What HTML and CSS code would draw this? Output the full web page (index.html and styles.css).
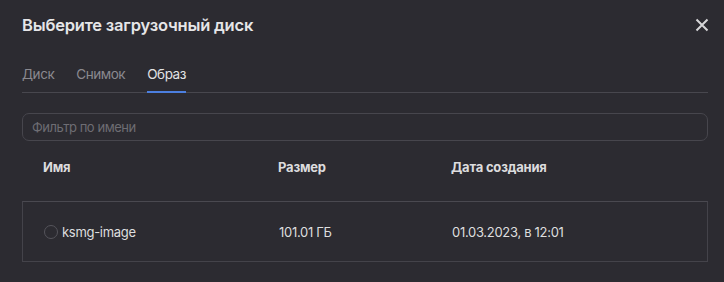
FILE: index.html
```html
<!DOCTYPE html>
<html lang="ru">
<head>
    <meta charset="UTF-8">
    <meta name="viewport" content="width=device-width, initial-scale=1.0">
    <title>Выберите загрузочный диск</title>
    <link rel="stylesheet" href="styles.css">
</head>
<body>
    <section class="dialog">
        <div class="dialog__header">
            <h1 class="dialog__title">Выберите загрузочный диск</h1>
            <button class="dialog__close" aria-label="Закрыть">
                <svg class="dialog__close-image" viewBox="0 0 14 14">
                    <path d="M1.5 1.5L12.5 12.5M12.5 1.5L1.5 12.5" />
                </svg>
            </button>
        </div>

        <nav class="tabs">
            <button class="tabs__item">Диск</button>
            <button class="tabs__item">Снимок</button>
            <button class="tabs__item tabs__item--active">Образ</button>
        </nav>

        <input class="filter" type="text" placeholder="Фильтр по имени">

        <div class="table">
            <div class="table__head">
                <div class="table__cell table__cell--head">Имя</div>
                <div class="table__cell table__cell--head">Размер</div>
                <div class="table__cell table__cell--head">Дата создания</div>
            </div>
            <label class="table__row">
                <div class="table__cell table__cell--name">
                    <span class="radio"></span>
                    ksmg-image
                </div>
                <div class="table__cell">101.01 ГБ</div>
                <div class="table__cell">01.03.2023, в 12:01</div>
            </label>
        </div>
    </section>
</body>
</html>
```

FILE: styles.css
```css
body {
    margin: 0;
    min-height: 100vh;
    background: #2c2b31;

    font-family: Inter, "Noto Sans", sans-serif;
    color: #dededf;
}

.dialog {
    padding: 14px 16px 0 22px;
}

.dialog__header {
    display: flex;
    align-items: center;
    justify-content: space-between;
    height: 22px;
}

.dialog__title {
    margin: 0;

    font-size: 16.5px;
    font-weight: 600;
    line-height: 22px;
    letter-spacing: -0.2px;

    color: #e6e6e8;
}

.dialog__close {
    width: 14px;
    height: 14px;
    margin-right: -1px;

    background: transparent;
    border: 0;
    padding: 0;

    cursor: pointer;
    color: #d6d6d8;
}

.dialog__close-image {
    display: block;
    width: 100%;

    fill: none;
    stroke: currentColor;
    stroke-width: 2;
}

.tabs {
    margin-top: 28px;

    display: flex;
    gap: 22px;

    border-bottom: 1px solid #48474e;
}

.tabs__item {
    background: transparent;
    border: 0;
    padding: 0 0 7px;
    margin-bottom: -1px;

    font-family: inherit;
    font-size: 13.5px;
    line-height: 20px;
    letter-spacing: -0.45px;

    color: #8a898f;
    border-bottom: 2px solid transparent;
    cursor: pointer;
}

.tabs__item--active {
    color: #e2e2e4;
    border-bottom-color: #4c7fe0;
}

.filter {
    display: block;
    box-sizing: border-box;
    width: 100%;
    height: 28px;
    margin-top: 20px;
    padding: 0 9px;

    background: transparent;
    border: 1px solid #47464d;
    border-radius: 7px;
    outline: none;

    font-family: inherit;
    font-size: 13px;
    letter-spacing: -0.45px;
    color: #dededf;
}

.filter::placeholder {
    color: #6e6d73;
}

.table__head,
.table__row {
    display: grid;
    grid-template-columns: 235px 174px 1fr;
}

.table__head {
    height: 60px;
    align-items: center;
    padding-bottom: 8px;
    box-sizing: border-box;
}

.table__cell {
    padding: 0 20px 0 21px;

    font-size: 13px;
    line-height: 18px;
    letter-spacing: -0.3px;
}

.table__cell:last-child {
    padding-left: 20px;
}

.table__cell--head {
    font-weight: 700;
    letter-spacing: -0.2px;
    color: #dcdcde;
}

.table__row {
    height: 61px;
    box-sizing: border-box;
    align-items: center;

    border: 1px solid #44434a;
    border-top-color: #4a4950;
    cursor: pointer;
}

.table__cell--name {
    display: flex;
    align-items: center;
    gap: 4px;
}

.radio {
    width: 14px;
    height: 14px;
    box-sizing: border-box;

    border: 1px solid #55545b;
    border-radius: 50%;
}
```
